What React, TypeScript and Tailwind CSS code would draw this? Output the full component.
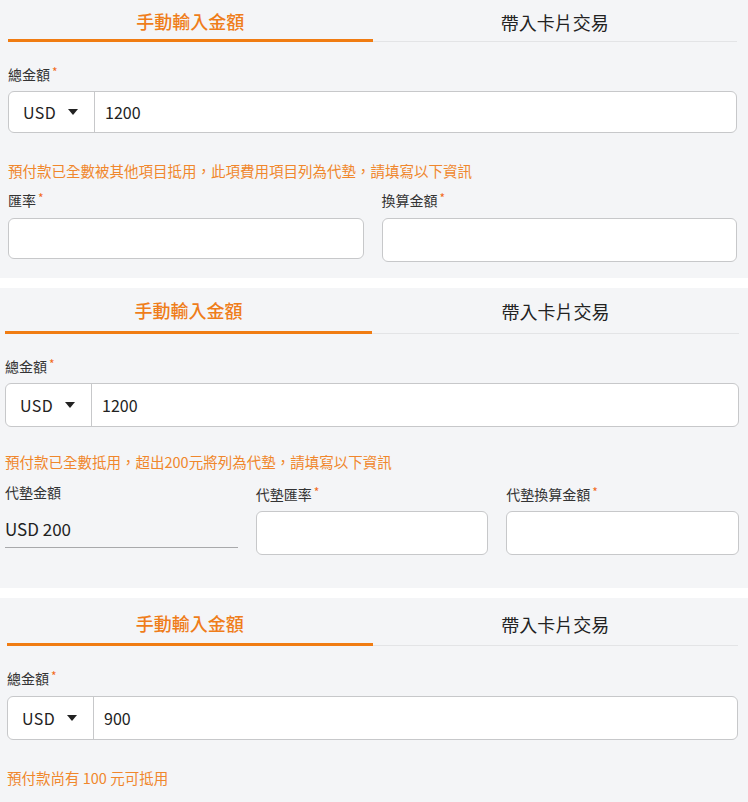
const font = { fontFamily: '"Noto Sans CJK TC", "Noto Sans", sans-serif' };

const Tabs = ({ h, pt = "" }: { h: string; pt?: string }) => (
  <div className={`flex items-end ${h}`}>
    <div className={`flex-1 h-full flex items-center justify-center border-b-[3px] border-[#f07c12] text-[18px] font-medium text-[#ef7d1a] ${pt}`}>
      手動輸入金額
    </div>
    <div className={`flex-1 h-full flex items-center justify-center border-b border-[#e3e4e6] text-[18px] font-normal text-[#222] ${pt}`}>
      帶入卡片交易
    </div>
  </div>
);

const Label = ({ text, required = true }: { text: string; required?: boolean }) => (
  <div className="text-[14px] leading-5 text-[#333] flex items-start">
    {text}
    {required && <span className="text-[#f26a1b] text-[12px] leading-3 ml-[2px] mt-[2px]">*</span>}
  </div>
);

const Caret = () => (
  <svg width="10" height="6" viewBox="0 0 10 6" className="ml-auto">
    <path d="M0 0h10L5 6z" fill="#222" />
  </svg>
);

const AmountInput = ({ value, h }: { value: string; h: string }) => (
  <div className={`flex ${h} bg-white border border-[#c7c8ca] rounded-[6px] text-[16px] text-[#222]`}>
    <div className="w-[86px] flex items-center pl-[14px] pr-[16px] border-r border-[#c7c8ca] tracking-wide">
      USD
      <Caret />
    </div>
    <div className="flex items-center pl-[10px]">{value}</div>
  </div>
);

const Box = ({ h }: { h: string }) => (
  <div className={`${h} bg-white border border-[#c7c8ca] rounded-[6px]`} />
);

const Hint = ({ text }: { text: string }) => (
  <div className="text-[14.5px] leading-5 text-[#f0872c]">{text}</div>
);

export default function App() {
  return (
    <div className="w-[748px] h-[802px] bg-white overflow-hidden" style={font}>
      {/* panel 1 */}
      <div className="bg-[#f4f5f7] pl-[8px] pr-[11px] pb-[16px]">
        <Tabs h="h-[42px]" pt="pt-[3px]" />
        <div className="mt-[22px]">
          <Label text="總金額" />
        </div>
        <div className="mt-[7px]">
          <AmountInput value="1200" h="h-[42px]" />
        </div>
        <div className="mt-[28px]">
          <Hint text="預付款已全數被其他項目抵用，此項費用項目列為代墊，請填寫以下資訊" />
        </div>
        <div className="grid grid-cols-2 gap-[18px] mt-[9px]">
          <div>
            <Label text="匯率" />
            <div className="mt-[8px]">
              <Box h="h-[41px]" />
            </div>
          </div>
          <div>
            <Label text="換算金額" />
            <div className="mt-[8px]">
              <Box h="h-[44px]" />
            </div>
          </div>
        </div>
      </div>

      {/* panel 2 */}
      <div className="bg-[#f4f5f7] pl-[5px] pr-[9px] pb-[33px] mt-[10px]">
        <Tabs h="h-[46px]" pt="pt-[2px]" />
        <div className="mt-[22px]">
          <Label text="總金額" />
        </div>
        <div className="mt-[7px]">
          <AmountInput value="1200" h="h-[44px]" />
        </div>
        <div className="mt-[25px]">
          <Hint text="預付款已全數抵用，超出200元將列為代墊，請填寫以下資訊" />
        </div>
        <div className="grid grid-cols-3 gap-[18px] mt-[10px]">
          <div>
            <Label text="代墊金額" required={false} />
            <div className="mt-[8px] h-[38px] flex items-center border-b border-[#a8a9ab] text-[17px] text-[#222]">
              USD 200
            </div>
          </div>
          <div className="pt-[2px]">
            <Label text="代墊匯率" />
            <div className="mt-[7px]">
              <Box h="h-[44px]" />
            </div>
          </div>
          <div className="pt-[2px]">
            <Label text="代墊換算金額" />
            <div className="mt-[7px]">
              <Box h="h-[44px]" />
            </div>
          </div>
        </div>
      </div>

      {/* panel 3 */}
      <div className="bg-[#f4f5f7] pl-[7px] pr-[10px] pb-[30px] mt-[10px]">
        <Tabs h="h-[48px]" pt="pt-[6px]" />
        <div className="mt-[22px]">
          <Label text="總金額" />
        </div>
        <div className="mt-[8px]">
          <AmountInput value="900" h="h-[44px]" />
        </div>
        <div className="mt-[28px]">
          <Hint text="預付款尚有 100 元可抵用" />
        </div>
      </div>
    </div>
  );
}
